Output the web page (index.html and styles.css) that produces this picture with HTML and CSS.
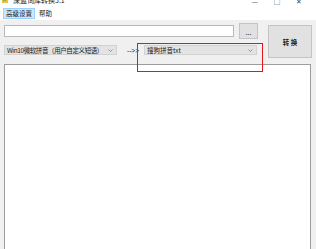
FILE: index.html
```html
<!DOCTYPE html>
<html lang="zh-CN">

<head>
    <meta charset="UTF-8">
    <title>深蓝词库转换3.1</title>
    <meta name="viewport" content="width=device-width, initial-scale=1.0">
    <link rel="stylesheet" href="styles.css">
</head>

<body>
    <div class="titlebar">
        <div class="title">
            <svg class="app-icon" width="6" height="6" viewBox="0 0 6 6">
                <rect x="0" y="0" width="6" height="6" fill="#e8c23a"/>
                <rect x="1" y="1" width="3" height="3" fill="#7bb661"/>
            </svg>
            <span class="title-text">深蓝词库转换3.1</span>
        </div>
        <div class="win-controls">
            <span class="win-btn">&#8212;</span>
            <span class="win-btn">&#9633;</span>
            <span class="win-btn">&#10005;</span>
        </div>
    </div>
    <div class="menubar">
        <span class="menu-item active">高级设置</span>
        <span class="menu-item">帮助</span>
    </div>
    <div class="main">
        <div class="top">
            <div class="left">
                <div class="path-row">
                    <div class="path-input"></div>
                    <div class="btn dots-btn">...</div>
                </div>
                <div class="combo-row">
                    <div class="combo combo-from">
                        <span class="combo-text">Win10微软拼音（用户自定义短语）</span>
                        <svg class="chevron" width="5" height="3" viewBox="0 0 5 3">
                            <path d="M0.5 0.5 L2.5 2.5 L4.5 0.5" fill="none" stroke="#808080" stroke-width="0.8"/>
                        </svg>
                    </div>
                    <span class="arrow">--&gt;&gt;</span>
                    <div class="combo combo-to">
                        <span class="combo-text">搜狗拼音txt</span>
                        <svg class="chevron" width="5" height="3" viewBox="0 0 5 3">
                            <path d="M0.5 0.5 L2.5 2.5 L4.5 0.5" fill="none" stroke="#808080" stroke-width="0.8"/>
                        </svg>
                    </div>
                </div>
            </div>
            <div class="btn convert-btn">转 换</div>
        </div>
        <div class="output"></div>
    </div>
    <div class="highlight"></div>
</body>

</html>
```

FILE: styles.css
```css
html,
body {
    margin: 0;
    padding: 0;
}

body {
    width: 316px;
    height: 249px;
    overflow: hidden;
    position: relative;
    background: #f0f0f0;
    font-family: 'Noto Sans CJK SC', 'Liberation Sans', sans-serif;
    font-size: 6.5px;
    color: #1a1a1a;
}

.titlebar {
    height: 7px;
    background: #fff;
    display: flex;
    justify-content: space-between;
    overflow: hidden;
}

.title {
    display: flex;
    align-items: center;
    margin-top: -5px;
    padding-left: 2px;
    height: 10px;
}

.app-icon {
    display: block;
    margin-right: 5px;
}

.title-text {
    font-size: 7px;
    color: #222;
}

.win-controls {
    display: flex;
    margin-top: -4px;
    padding-right: 6px;
}

.win-btn {
    width: 22px;
    text-align: center;
    font-size: 7px;
    line-height: 10px;
    color: #444;
}

.menubar {
    height: 13px;
    background: #fff;
    display: flex;
    align-items: center;
    padding-left: 3px;
}

.menu-item {
    padding: 0 2px;
    line-height: 9px;
    border: 1px solid transparent;
    margin-right: 1px;
}

.menu-item.active {
    background: #cce8ff;
    border-color: #99d1ff;
}

.main {
    padding: 3px 4px 0 4px;
}

.top {
    display: flex;
    gap: 10px;
}

.left {
    width: 254px;
    display: flex;
    flex-direction: column;
}

.path-row {
    display: flex;
    align-items: center;
    gap: 5px;
    height: 16px;
}

.path-input {
    width: 228px;
    height: 10px;
    background: #fff;
    border: 1px solid #b9b9b9;
}

.btn {
    background: #e1e1e1;
    border: 1px solid #c4c4c4;
    box-sizing: border-box;
    display: flex;
    align-items: center;
    justify-content: center;
}

.dots-btn {
    width: 19px;
    height: 16px;
    line-height: 1;
    padding-top: 2px;
}

.combo-row {
    display: flex;
    align-items: center;
    margin-top: 6px;
    height: 10px;
}

.combo {
    width: 113px;
    height: 10px;
    box-sizing: border-box;
    background: #e3e3e3;
    border: 1px solid #d2d2d2;
    display: flex;
    align-items: center;
    justify-content: space-between;
    padding: 0 3px 0 2px;
    white-space: nowrap;
}

.combo-from .combo-text {
    letter-spacing: -0.4px;
}

.chevron {
    display: block;
}

.arrow {
    margin-left: 10px;
    width: 17px;
    font-family: 'Liberation Sans', sans-serif;
}

.convert-btn {
    width: 44px;
    height: 33px;
    margin-top: 2px;
    font-size: 6.5px;
    font-weight: bold;
}

.output {
    margin-top: 6px;
    width: 307px;
    height: 200px;
    box-sizing: border-box;
    background: #fff;
    border: 1px solid #9d9d9d;
}

/* annotation box drawn over the form */
.highlight {
    position: absolute;
    left: 137px;
    top: 43px;
    width: 126px;
    height: 29px;
    box-sizing: border-box;
    border: 1px solid #e8141c;
}
```
